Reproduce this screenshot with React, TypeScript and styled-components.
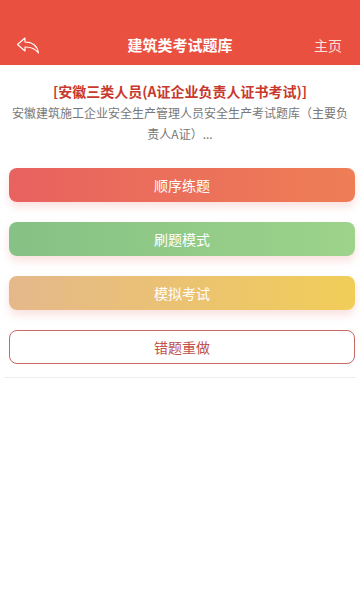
import React from 'react'
import styled, { createGlobalStyle } from 'styled-components'

const GlobalStyle = createGlobalStyle`
  body {
    margin: 0;
    background: #ffffff;
    font-family: "Noto Sans CJK SC", "Noto Sans", sans-serif;
  }
`

const Page = styled.div`
  width: 360px;
  min-height: 600px;
  background: #ffffff;
`

const Header = styled.div`
  height: 65px;
  background: #e9503f;
  display: flex;
  align-items: flex-end;
  justify-content: space-between;
  padding: 0 18px 10px 16px;
  box-sizing: border-box;
  color: #ffffff;
`

const BackButton = styled.div`
  width: 26px;
  height: 20px;
  display: flex;
  align-items: center;
`

const HeaderTitle = styled.div`
  font-size: 15px;
  font-weight: 700;
  line-height: 20px;
  margin-left: 4px;
`

const HomeLink = styled.div`
  font-size: 14px;
  line-height: 20px;
  color: #fbe0dc;
`

const Info = styled.div`
  padding: 16px 10px 0;
  text-align: center;
`

const InfoTitle = styled.div`
  color: #c9382c;
  font-size: 14px;
  font-weight: 700;
  line-height: 20px;
`

const InfoDesc = styled.div`
  color: #777777;
  font-size: 12px;
  line-height: 21px;
  margin-top: 1px;
`

const Actions = styled.div`
  display: flex;
  flex-direction: column;
  gap: 20px;
  padding: 24px 5px 0 9px;
`

const ActionButton = styled.div<{ $from?: string; $to?: string; $outline?: boolean }>`
  height: 34px;
  border-radius: 8px;
  display: flex;
  align-items: center;
  justify-content: center;
  font-size: 14px;
  box-sizing: border-box;
  color: ${(p) => (p.$outline ? '#c0504a' : '#ffffff')};
  background: ${(p) => (p.$outline ? '#ffffff' : `linear-gradient(to right, ${p.$from}, ${p.$to})`)};
  border: ${(p) => (p.$outline ? '1px solid #c86763' : 'none')};
  box-shadow: ${(p) => (p.$outline ? 'none' : '0 5px 8px rgba(230, 120, 110, 0.22)')};
`

const Divider = styled.div`
  height: 1px;
  background: #eeeeee;
  margin: 13px 4px 0;
`

const BackIcon = () => (
  <svg width="24" height="17" viewBox="0 0 24 17" fill="none">
    <path
      d="M9 1 L1.5 7.5 L9 14 L9 10 C14.5 9.8 19 11.5 22.5 16 C21.5 9.5 17 5.2 9 5 Z"
      stroke="#ffffff"
      strokeWidth="1.1"
      strokeLinejoin="round"
    />
  </svg>
)

export default function App() {
  return (
    <Page>
      <GlobalStyle />
      <Header>
        <BackButton>
          <BackIcon />
        </BackButton>
        <HeaderTitle>建筑类考试题库</HeaderTitle>
        <HomeLink>主页</HomeLink>
      </Header>
      <Info>
        <InfoTitle>[安徽三类人员(A证企业负责人证书考试)]</InfoTitle>
        <InfoDesc>安徽建筑施工企业安全生产管理人员安全生产考试题库（主要负责人A证）...</InfoDesc>
      </Info>
      <Actions>
        <ActionButton $from="#e8625f" $to="#ee7e56">顺序练题</ActionButton>
        <ActionButton $from="#86c185" $to="#9dd38a">刷题模式</ActionButton>
        <ActionButton $from="#e5b88b" $to="#f1cd58">模拟考试</ActionButton>
        <ActionButton $outline>错题重做</ActionButton>
      </Actions>
      <Divider />
    </Page>
  )
}
